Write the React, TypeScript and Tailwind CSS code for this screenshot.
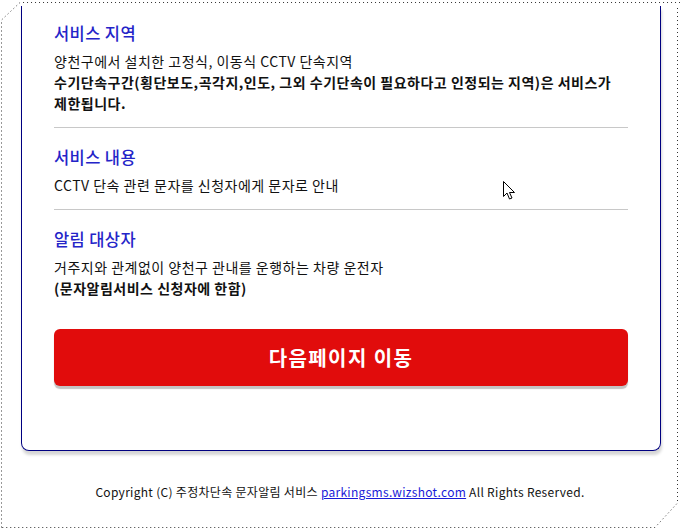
import React from "react";

const font = { fontFamily: '"Noto Sans CJK KR", "Noto Sans", sans-serif' };

function Section({ title, children, last }: { title: string; children: React.ReactNode; last?: boolean }) {
  return (
    <div className={last ? "" : "border-b border-[#c8c8c8] pb-[13px] mb-[18px]"}>
      <h3 className="text-[16.5px] leading-[22px] tracking-[0.4px] text-[#2424c8] font-medium">{title}</h3>
      <div className="mt-[7px] text-[14px] leading-[21px] tracking-[0.5px] text-[#111]">{children}</div>
    </div>
  );
}

export default function App() {
  return (
    <div className="relative w-[680px] h-[530px] bg-white overflow-hidden" style={font}>
      <div className="ml-[21px] mt-[6px] w-[640px] border-x border-b border-[#000080] rounded-b-[8px] shadow-[1px_4px_3px_#d6d6d6] px-8 pt-[16px] pb-[64px]">
        <Section title="서비스 지역">
          <p>양천구에서 설치한 고정식, 이동식 CCTV 단속지역</p>
          <p className="font-bold whitespace-nowrap">
            수기단속구간(횡단보도,곡각지,인도, 그외 수기단속이 필요하다고 인정되는 지역)은 서비스가
            <br />
            제한됩니다.
          </p>
        </Section>
        <Section title="서비스 내용">
          <p>CCTV 단속 관련 문자를 신청자에게 문자로 안내</p>
        </Section>
        <Section title="알림 대상자" last>
          <p>거주지와 관계없이 양천구 관내를 운행하는 차량 운전자</p>
          <p className="font-bold">(문자알림서비스 신청자에 한함)</p>
        </Section>
        <button className="mt-[30px] w-full h-[57px] rounded-[6px] bg-[#e10c0c] text-white text-[20px] tracking-[1.4px] font-bold shadow-[0_3px_1px_#c4c4c4] flex items-center justify-center">
          다음페이지 이동
        </button>
      </div>
      <p className="mt-[32px] text-center text-[12px] leading-[18px] tracking-[0.3px] text-[#111]">
        Copyright (C) 주정차단속 문자알림 서비스{" "}
        <a className="text-[#1a1ad8] underline">parkingsms.wizshot.com</a> All Rights Reserved.
      </p>

      <svg className="absolute left-0 top-0 pointer-events-none" width="680" height="530">
        <polyline
          points="1.5,527.5 1.5,20 20,2.5 680,2.5"
          fill="none"
          stroke="#333"
          strokeWidth="1"
          strokeDasharray="1 3"
        />
        <polyline
          points="677.5,8 677.5,503 655,527.5 1.5,527.5"
          fill="none"
          stroke="#333"
          strokeWidth="1"
          strokeDasharray="1 3"
        />
      </svg>

      <svg className="absolute left-[503px] top-[181px]" width="13" height="20" viewBox="0 0 13 20">
        <path
          d="M0.5 0.5 L0.5 15.5 L4 12 L6.5 18 L9 17 L6.5 11.5 L11.5 11.5 Z"
          fill="#fff"
          stroke="#000"
          strokeWidth="1"
          strokeLinejoin="miter"
        />
      </svg>
    </div>
  );
}
